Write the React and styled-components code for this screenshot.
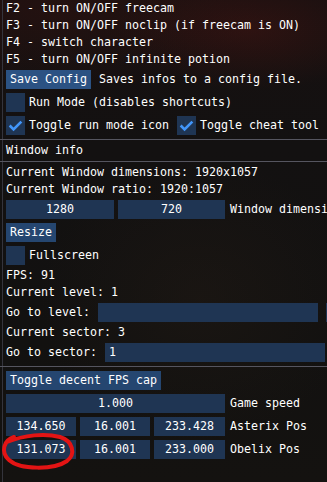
import React from 'react';
import styled, { createGlobalStyle } from 'styled-components';


const Colors = {
  text: '#ffffff',
  frame: '#1f3553',
  button: '#254670',
  buttonLight: '#2b5283',
  check: '#4296fa',
  separator: '#55555f',
  border: '#34343c',
};

const GlobalStyle = createGlobalStyle`
  html, body {
    margin: 0;
    padding: 0;
    width: 327px;
    height: 482px;
    overflow: hidden;
    background: #121110;
  }
`

const Backdrop = styled.div`
  position: relative;
  width: 327px;
  height: 482px;
  overflow: hidden;
  background:
    radial-gradient(ellipse 140px 60px at 250px 30px, rgba(90, 22, 18, 0.35), transparent),
    radial-gradient(ellipse 200px 80px at 60px 10px, rgba(60, 20, 16, 0.35), transparent),
    radial-gradient(ellipse 160px 140px at 200px 300px, rgba(40, 30, 22, 0.35), transparent),
    linear-gradient(180deg, #171010 0%, #131111 30%, #121110 70%, #141210 100%);
`

const Window = styled.div`
  display: flex;
  flex-direction: column;
  gap: 4px;
  width: 420px;
  min-height: 482px;
  box-sizing: border-box;
  margin-left: 2px;
  padding: 2px 0 0 3px;
  border-left: 1px solid ${Colors.border};
  font-family: "DejaVu Sans Mono", "Liberation Mono", monospace;
  font-size: 11.63px;
  line-height: 13px;
  color: ${Colors.text};
`

const Line = styled.div`
  height: 13px;
  white-space: pre;
`

const Row = styled.div`
  display: flex;
  align-items: center;
  gap: ${(p) => p.$gap || 8}px;
  height: 19px;
  white-space: pre;
`

const Button = styled.div`
  height: 19px;
  line-height: 19px;
  padding: 0 4px;
  background: ${(p) => (p.$light ? Colors.buttonLight : Colors.button)};
  white-space: pre;
`

const Field = styled.div`
  flex: none;
  box-sizing: border-box;
  width: ${(p) => p.$w}px;
  height: 19px;
  line-height: 19px;
  padding: 0 4px;
  text-align: ${(p) => p.$align || 'center'};
  background: ${Colors.frame};
  white-space: pre;
  overflow: hidden;
`

const Group = styled.div`
  display: flex;
  gap: 4px;
`

const Label = styled.span`
  margin-left: 1px;
`

const Separator = styled.div`
  height: 1px;
  margin-left: -6px;
  background: ${Colors.separator};
`

const CheckRow = styled.div`
  display: flex;
  align-items: center;
  gap: 4px;
  height: 19px;
  white-space: pre;
`

const Box = styled.div`
  width: 19px;
  height: 19px;
  background: ${Colors.frame};
`

const Mark = styled.svg`
  display: block;
`

const Annotation = styled.svg`
  position: absolute;
  left: 0;
  top: 0;
  pointer-events: none;
`


const CheckBox = ({ checked, label }) => (
  <CheckRow>
    <Box>
      {checked && (
        <Mark width="19" height="19" viewBox="0 0 19 19">
          <polyline
            points="3.65,9.5 7.55,13.4 15.35,5.6"
            fill="none"
            stroke={Colors.check}
            strokeWidth="2.6"
          />
        </Mark>
      )}
    </Box>
    <span>{label}</span>
  </CheckRow>
)

const App = () => (
  <Backdrop>
    <GlobalStyle />
    <Window>
      <Line>F2 - turn ON/OFF freecam</Line>
      <Line>F3 - turn ON/OFF noclip (if freecam is ON)</Line>
      <Line>F4 - switch character</Line>
      <Line>F5 - turn ON/OFF infinite potion</Line>
      <Row>
        <Button $light>Save Config</Button>
        <span>Saves infos to a config file.</span>
      </Row>
      <CheckBox label="Run Mode (disables shortcuts)" />
      <Row>
        <CheckBox checked label="Toggle run mode icon" />
        <CheckBox checked label="Toggle cheat tool" />
      </Row>
      <Separator />
      <Line>Window info</Line>
      <Separator />
      <Line>Current Window dimensions: 1920x1057</Line>
      <Line>Current Window ratio: 1920:1057</Line>
      <Row $gap={4}>
        <Group>
          <Field $w={108}>1280</Field>
          <Field $w={107}>720</Field>
        </Group>
        <Label>Window dimensions</Label>
      </Row>
      <Row>
        <Button>Resize</Button>
      </Row>
      <CheckBox label="Fullscreen" />
      <Line>FPS: 91</Line>
      <Line>Current level: 1</Line>
      <Row>
        <span>Go to level:</span>
        <Field $w={220} $align="left" />
        <Field $w={60} />
      </Row>
      <Line>Current sector: 3</Line>
      <Row>
        <span>Go to sector:</span>
        <Field $w={220} $align="left">1</Field>
        <Field $w={60} />
      </Row>
      <Separator />
      <Row>
        <Button>Toggle decent FPS cap</Button>
      </Row>
      <Row $gap={4}>
        <Field $w={219}>1.000</Field>
        <Label>Game speed</Label>
      </Row>
      <Row $gap={4}>
        <Group>
          <Field $w={70}>134.650</Field>
          <Field $w={70}>16.001</Field>
          <Field $w={71}>233.428</Field>
        </Group>
        <Label>Asterix Pos</Label>
      </Row>
      <Row $gap={4}>
        <Group>
          <Field $w={70}>131.073</Field>
          <Field $w={70}>16.001</Field>
          <Field $w={71}>233.000</Field>
        </Group>
        <Label>Obelix Pos</Label>
      </Row>
    </Window>
    <Annotation width="327" height="482" viewBox="0 0 327 482">
      <path
        d="M14 437 C4 440 0 452 9 460 C20 470 54 470 67 461 C76 454 73 441 60 437 C45 433 24 435 7 442"
        fill="none"
        stroke="#e31414"
        strokeWidth="4"
        strokeLinecap="round"
      />
    </Annotation>
  </Backdrop>
)

export default App;
